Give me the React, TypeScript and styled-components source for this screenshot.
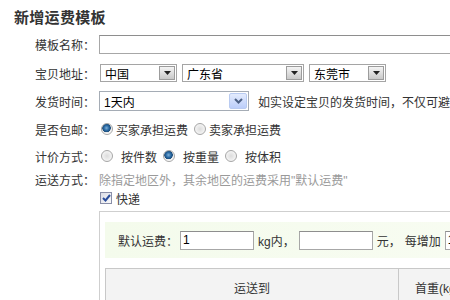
import styled, { createGlobalStyle } from "styled-components";

const GlobalStyle = createGlobalStyle`
    html, body {
        margin: 0;
        padding: 0;
        background: #fff;
        overflow: hidden;
    }
    body {
        font-family: "Liberation Sans", "Noto Sans CJK SC", sans-serif;
        font-size: 12px;
        color: #333;
    }
`

function Arrow() {
    return (
        <svg width="7" height="4" viewBox="0 0 7 4">
            <path d="M0 0 H7 L3.5 4 Z" fill="#222" />
        </svg>
    );
}

function Chevron() {
    return (
        <svg width="9" height="6" viewBox="0 0 9 6">
            <path d="M1 1 L4.5 4.5 L8 1" stroke="#4d6185" strokeWidth="2" fill="none" />
        </svg>
    );
}

interface RadioProps {
    checked?: boolean;
    label: string;
    gap?: number;
}

function Radio(props: RadioProps) {
    const { checked, label, gap } = props;
    return (
        <RadioItem $gap={gap ?? 3}>
            <RadioDot $checked={!!checked} />
            <span>{label}</span>
        </RadioItem>
    );
}

export default function App() {
    return (
        <Page>
            <GlobalStyle />
            <Title>新增运费模板</Title>

            <Row $h={23}>
                <Label>模板名称：</Label>
                <TextInput $w={360} />
            </Row>

            <Row $h={34}>
                <Label>宝贝地址：</Label>
                <Selects>
                    <SelectBox $w={77}>
                        <span>中国</span>
                        <ArrowBtn><Arrow /></ArrowBtn>
                    </SelectBox>
                    <SelectBox $w={122}>
                        <span>广东省</span>
                        <ArrowBtn><Arrow /></ArrowBtn>
                    </SelectBox>
                    <SelectBox $w={77}>
                        <span>东莞市</span>
                        <ArrowBtn><Arrow /></ArrowBtn>
                    </SelectBox>
                </Selects>
            </Row>

            <Row $h={22}>
                <Label>发货时间：</Label>
                <TimeSelect>
                    <span>1天内</span>
                    <BlueBtn><Chevron /></BlueBtn>
                </TimeSelect>
                <Hint>如实设定宝贝的发货时间，不仅可避免发货咨询和纠纷</Hint>
            </Row>

            <Row $h={34}>
                <Label>是否包邮：</Label>
                <Radio checked label="买家承担运费" />
                <Radio label="卖家承担运费" />
            </Row>

            <Row $h={20}>
                <Label>计价方式：</Label>
                <Radio label="按件数" gap={8} />
                <Radio checked label="按重量" gap={8} />
                <Radio label="按体积" gap={8} />
            </Row>

            <Row $h={26}>
                <Label>运送方式：</Label>
                <GrayText>除指定地区外，其余地区的运费采用"默认运费"</GrayText>
            </Row>

            <Row $h={12}>
                <Label />
                <CheckItem>
                    <CheckBox>
                        <svg width="9" height="8" viewBox="0 0 9 8">
                            <path d="M1 4 L3.5 6.5 L8 1" stroke="#2a4d9c" strokeWidth="2" fill="none" />
                        </svg>
                    </CheckBox>
                    <span>快递</span>
                </CheckItem>
            </Row>

            <Panel>
                <DefaultBar>
                    <BarLabel>默认运费：</BarLabel>
                    <TextInput $w={74} $h={19} defaultValue="1" />
                    <span>kg内，</span>
                    <TextInput $w={74} $h={19} />
                    <span>元，</span>
                    <span>每增加</span>
                    <TextInput $w={40} $h={19} defaultValue="1" />
                </DefaultBar>
                <Table>
                    <HeadCell $w={292}>运送到</HeadCell>
                    <HeadCell $w={120} $left>首重(kg)</HeadCell>
                </Table>
            </Panel>
        </Page>
    );
}

const Page = styled.div`
    width: 450px;
    height: 300px;
    overflow: hidden;
    white-space: nowrap;
`
const Title = styled.h1`
    margin: 0;
    padding-left: 14px;
    height: 33px;
    line-height: 33px;
    font-size: 15px;
    font-weight: 700;
    color: #333;
    font-family: "Noto Sans CJK SC", sans-serif;
    letter-spacing: 0.3px;
`
const Row = styled.div<{ $h: number }>`
    display: flex;
    align-items: center;
    height: ${(p) => p.$h}px;
`
const Label = styled.label`
    flex: 0 0 96px;
    box-sizing: border-box;
    padding-right: 1px;
    text-align: right;
    color: #333;
    margin-right: 3px;
`
const TextInput = styled.input<{ $w: number; $h?: number }>`
    box-sizing: border-box;
    flex: 0 0 auto;
    width: ${(p) => p.$w}px;
    height: ${(p) => p.$h ?? 19}px;
    border: 1px solid #a7a7a7;
    border-top-color: #8e8e8e;
    padding: 0 2px;
    font-size: 12px;
    font-family: "Liberation Sans", sans-serif;
    color: #000;
    outline: none;
`
const Selects = styled.div`
    display: flex;
    gap: 5px;
    margin-left: 1px;
`
const SelectBox = styled.div<{ $w: number }>`
    box-sizing: border-box;
    flex: 0 0 auto;
    width: ${(p) => p.$w}px;
    height: 18px;
    border: 1px solid #a5a5a5;
    display: flex;
    align-items: center;
    justify-content: space-between;
    padding: 0 1px 0 4px;
    color: #000;
`
const ArrowBtn = styled.span`
    box-sizing: border-box;
    width: 16px;
    height: 14px;
    border: 1px solid #9c9c9c;
    background: linear-gradient(#f4f4f4, #c9c9c9);
    display: flex;
    align-items: center;
    justify-content: center;
`
const TimeSelect = styled.div`
    box-sizing: border-box;
    flex: 0 0 150px;
    height: 20px;
    border: 1px solid #a5acb5;
    display: flex;
    align-items: center;
    justify-content: space-between;
    padding: 0 1px 0 4px;
    color: #000;
`
const BlueBtn = styled.span`
    box-sizing: border-box;
    width: 18px;
    height: 16px;
    border-radius: 2px;
    border: 1px solid #b9cbf1;
    background: linear-gradient(#e3ebfd, #bccefa);
    display: flex;
    align-items: center;
    justify-content: center;
`
const Hint = styled.span`
    margin-left: 9px;
    color: #333;
`
const RadioItem = styled.span<{ $gap: number }>`
    display: inline-flex;
    align-items: center;
    flex: 0 0 auto;
    gap: ${(p) => p.$gap}px;
    margin-right: 4px;
`
const RadioDot = styled.span<{ $checked: boolean }>`
    box-sizing: border-box;
    width: 12px;
    height: 12px;
    margin-left: 2px;
    border-radius: 50%;
    border: 1px solid #a6a6a6;
    background: ${(p) =>
        p.$checked
            ? "radial-gradient(circle at 45% 40%, #7fb0d8 0, #2a6aa4 2.5px, #1d4e7c 4px, #e8e8e8 4.5px, #fff 6px)"
            : "radial-gradient(circle at 50% 50%, #dcdcdc 0, #f4f4f4 5px)"};
`
const GrayText = styled.span`
    color: #9a9a9a;
`
const CheckItem = styled.span`
    display: inline-flex;
    align-items: center;
    gap: 4px;
    margin-left: 1px;
`
const CheckBox = styled.span`
    box-sizing: border-box;
    width: 12px;
    height: 12px;
    border: 1px solid #8a8fa8;
    background: linear-gradient(135deg, #dcdde6, #fafafa);
    display: flex;
    align-items: center;
    justify-content: center;
`
const Panel = styled.div`
    margin: 7px 0 0 99px;
    width: 400px;
    border: 1px solid #cfcfcf;
    border-right: none;
    padding: 10px 0 0 5px;
    height: 120px;
`
const DefaultBar = styled.div`
    display: flex;
    align-items: center;
    gap: 4px;
    height: 36px;
    padding-left: 13px;
    background: linear-gradient(90deg, #f4fbec, #f8fcf2);
`
const BarLabel = styled.span`
    margin-right: -2px;
`
const Table = styled.div`
    display: flex;
    margin-top: 10px;
    height: 60px;
    border: 1px solid #c8c8c8;
    border-right: none;
    background: #f3f3f3;
`
const HeadCell = styled.div<{ $w: number; $left?: boolean }>`
    flex: 0 0 ${(p) => p.$w}px;
    height: 40px;
    line-height: 40px;
    padding-left: ${(p) => (p.$left ? 16 : 128)}px;
    box-sizing: border-box;
    border-left: ${(p) => (p.$left ? "1px solid #c8c8c8" : "none")};
    color: #333;
`
